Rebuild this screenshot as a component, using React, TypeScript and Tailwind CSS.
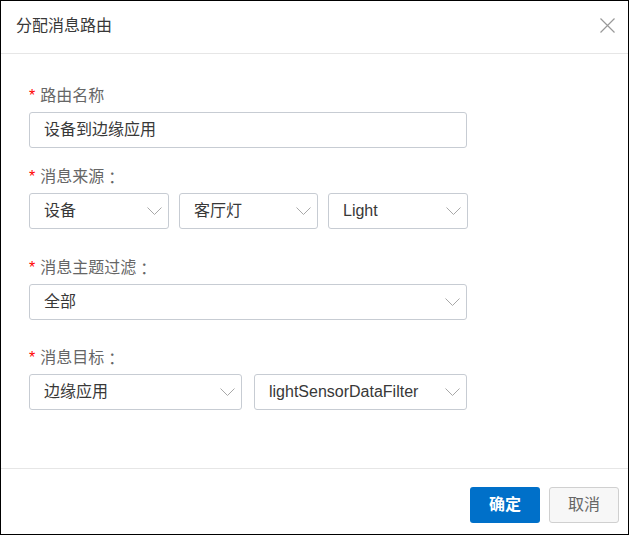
import React from 'react';

const font = { fontFamily: '"Liberation Sans", "Noto Sans CJK SC", sans-serif' };
const colonFont = { fontFamily: '"Noto Sans CJK TC", sans-serif' };

function Chevron() {
  return (
    <svg width="15" height="8" viewBox="0 0 15 8" className="shrink-0">
      <path d="M0.5 0.5 L7.5 7.5 L14.5 0.5" fill="none" stroke="#a8a8a8" strokeWidth="1" />
    </svg>
  );
}

function Label({ text, colon }: { text: string; colon?: boolean }) {
  return (
    <div className="flex h-5 items-center text-[16px] leading-5 text-[#666]">
      <span className="mr-[5px] text-[16px] text-[#f00]">*</span>
      {text}
      {colon && <span style={colonFont}>：</span>}
    </div>
  );
}

function Select({ value, width }: { value: string; width: string }) {
  return (
    <div className={`flex h-[36px] items-center justify-between rounded-[3px] border border-[#c7ccd3] bg-white pl-[14px] pr-[6px] ${width}`}>
      <span className="text-[16px] text-[#383838]">{value}</span>
      <Chevron />
    </div>
  );
}

export default function App() {
  return (
    <div style={font} className="flex h-[535px] w-[629px] flex-col border border-black bg-white">
      {/* header */}
      <div className="flex h-[53px] shrink-0 items-center justify-between border-b border-[#e6e6e6] pb-[3px] pl-[15px] pr-[13px]">
        <span className="text-[16px] text-[#383838]">分配消息路由</span>
        <svg width="15" height="15" viewBox="0 0 15 15">
          <path d="M0.5 0.5 L14.5 14.5 M14.5 0.5 L0.5 14.5" stroke="#999" strokeWidth="1.2" />
        </svg>
      </div>

      {/* body */}
      <div className="flex-1 pl-[28px] pt-[32px]">
        <Label text="路由名称" />
        <div className="mt-[6px] flex h-[36px] w-[438px] items-center rounded-[3px] border border-[#c7ccd3] pl-[14px] text-[16px] text-[#383838]">
          设备到边缘应用
        </div>

        <div className="mt-[19px]">
          <Label text="消息来源" colon />
        </div>
        <div className="mt-[6px] flex gap-[10px]">
          <Select value="设备" width="w-[140px]" />
          <Select value="客厅灯" width="w-[139px]" />
          <Select value="Light" width="w-[140px]" />
        </div>

        <div className="mt-[29px]">
          <Label text="消息主题过滤" colon />
        </div>
        <div className="mt-[6px]">
          <Select value="全部" width="w-[438px]" />
        </div>

        <div className="mt-[28px]">
          <Label text="消息目标" colon />
        </div>
        <div className="mt-[6px] flex gap-[12px]">
          <Select value="边缘应用" width="w-[213px]" />
          <Select value="lightSensorDataFilter" width="w-[213px]" />
        </div>
      </div>

      {/* footer */}
      <div className="flex h-[66px] shrink-0 justify-end gap-[9px] border-t border-[#e6e6e6] pr-[9px] pt-[18px]">
        <button className="h-[36px] w-[70px] rounded-[3px] bg-[#0070c9] text-[16px] font-bold text-white">确定</button>
        <button className="h-[36px] w-[70px] rounded-[3px] border border-[#d0d0d0] bg-[#f7f7f7] text-[16px] text-[#666]">取消</button>
      </div>
    </div>
  );
}
